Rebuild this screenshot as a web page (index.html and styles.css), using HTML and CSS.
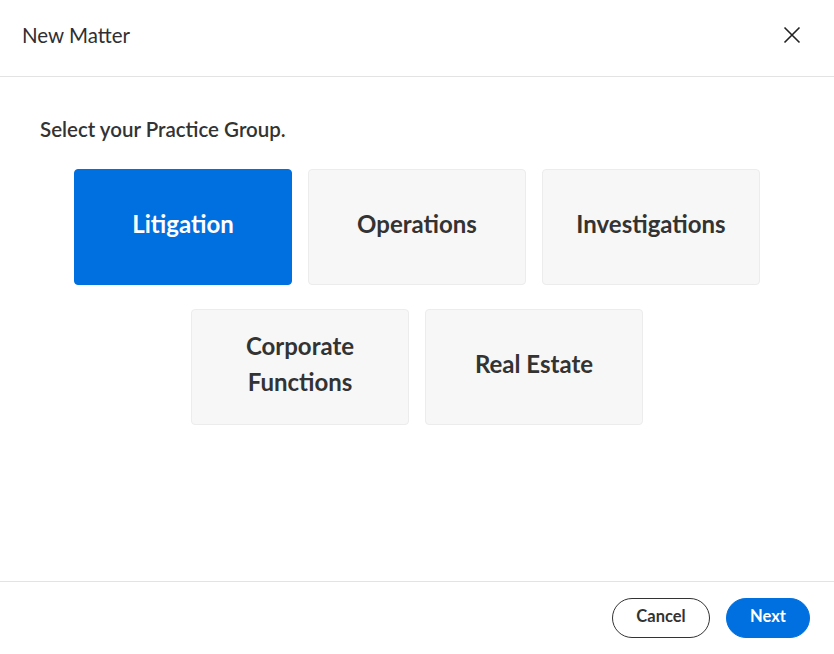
FILE: index.html
```html
<!DOCTYPE html>
<html lang="en">
<head>
  <meta charset="UTF-8">
  <title>New Matter</title>
  <meta name="viewport" content="width=device-width, initial-scale=1.0">
  <link rel="stylesheet" href="styles.css">
</head>
<body>
  <div class="modal">
    <div class="modal-header">
      <div class="modal-title">New Matter</div>
      <button class="close-btn" aria-label="Close">
        <svg width="18" height="18" viewBox="0 0 18 18">
          <path d="M1.5 1.5 L16.5 16.5 M16.5 1.5 L1.5 16.5" stroke="#222" stroke-width="1.6" fill="none"/>
        </svg>
      </button>
    </div>
    <div class="modal-body">
      <div class="prompt">Select your Practice Group.</div>
      <div class="groups">
        <div class="group selected">Litigation</div>
        <div class="group">Operations</div>
        <div class="group">Investigations</div>
        <div class="group">Corporate<br>Functions</div>
        <div class="group">Real Estate</div>
      </div>
    </div>
    <div class="modal-footer">
      <button class="btn btn-outline">Cancel</button>
      <button class="btn btn-primary">Next</button>
    </div>
  </div>
</body>
</html>
```

FILE: styles.css
```css
html, body {
  margin: 0;
  padding: 0;
  background: #fff;
  color: #333;
  font-family: 'Lato', 'Noto Sans', Arial, sans-serif;
}
.modal {
  width: 834px;
  height: 654px;
  display: flex;
  flex-direction: column;
  box-sizing: border-box;
}
.modal-header {
  height: 77px;
  box-sizing: border-box;
  border-bottom: 1px solid #e3e3e3;
  display: flex;
  align-items: center;
  justify-content: space-between;
  padding: 0 30px 0 22px;
}
.modal-title {
  font-size: 20.5px;
  font-weight: 400;
  color: #2f2f33;
  margin-top: -6px;
}
.close-btn {
  background: none;
  border: 0;
  padding: 0;
  width: 24px;
  height: 24px;
  display: flex;
  align-items: center;
  justify-content: center;
  margin-top: -6px;
  cursor: pointer;
}
.modal-body {
  flex: 1;
  padding: 40px 40px 0;
}
.prompt {
  font-size: 20.5px;
  font-weight: 600;
  color: #333;
  line-height: 24px;
}
.groups {
  display: flex;
  flex-wrap: wrap;
  justify-content: center;
  column-gap: 16px;
  row-gap: 24px;
  margin: 28px -40px 0;
}
.group {
  width: 218px;
  height: 116px;
  box-sizing: border-box;
  background: #f7f7f7;
  border: 1px solid #ececec;
  border-radius: 4px;
  display: flex;
  align-items: center;
  justify-content: center;
  text-align: center;
  font-size: 24px;
  font-weight: 700;
  line-height: 36px;
  padding-bottom: 6px;
  color: #333;
  cursor: pointer;
}
.group.selected {
  background: #0070e0;
  border-color: #0070e0;
  color: #fff;
}
.modal-footer {
  height: 73px;
  box-sizing: border-box;
  border-top: 1px solid #e3e3e3;
  display: flex;
  align-items: center;
  justify-content: flex-end;
  gap: 16px;
  padding: 0 24px 0 0;
}
.btn {
  height: 40px;
  border-radius: 20px;
  font-family: inherit;
  font-size: 16.5px;
  font-weight: 700;
  padding: 0 0 5px;
  cursor: pointer;
}
.btn-outline {
  width: 98px;
  background: #fff;
  border: 1px solid #333;
  color: #333;
}
.btn-primary {
  width: 84px;
  background: #0070e0;
  border: 1px solid #0070e0;
  color: #fff;
}
```
